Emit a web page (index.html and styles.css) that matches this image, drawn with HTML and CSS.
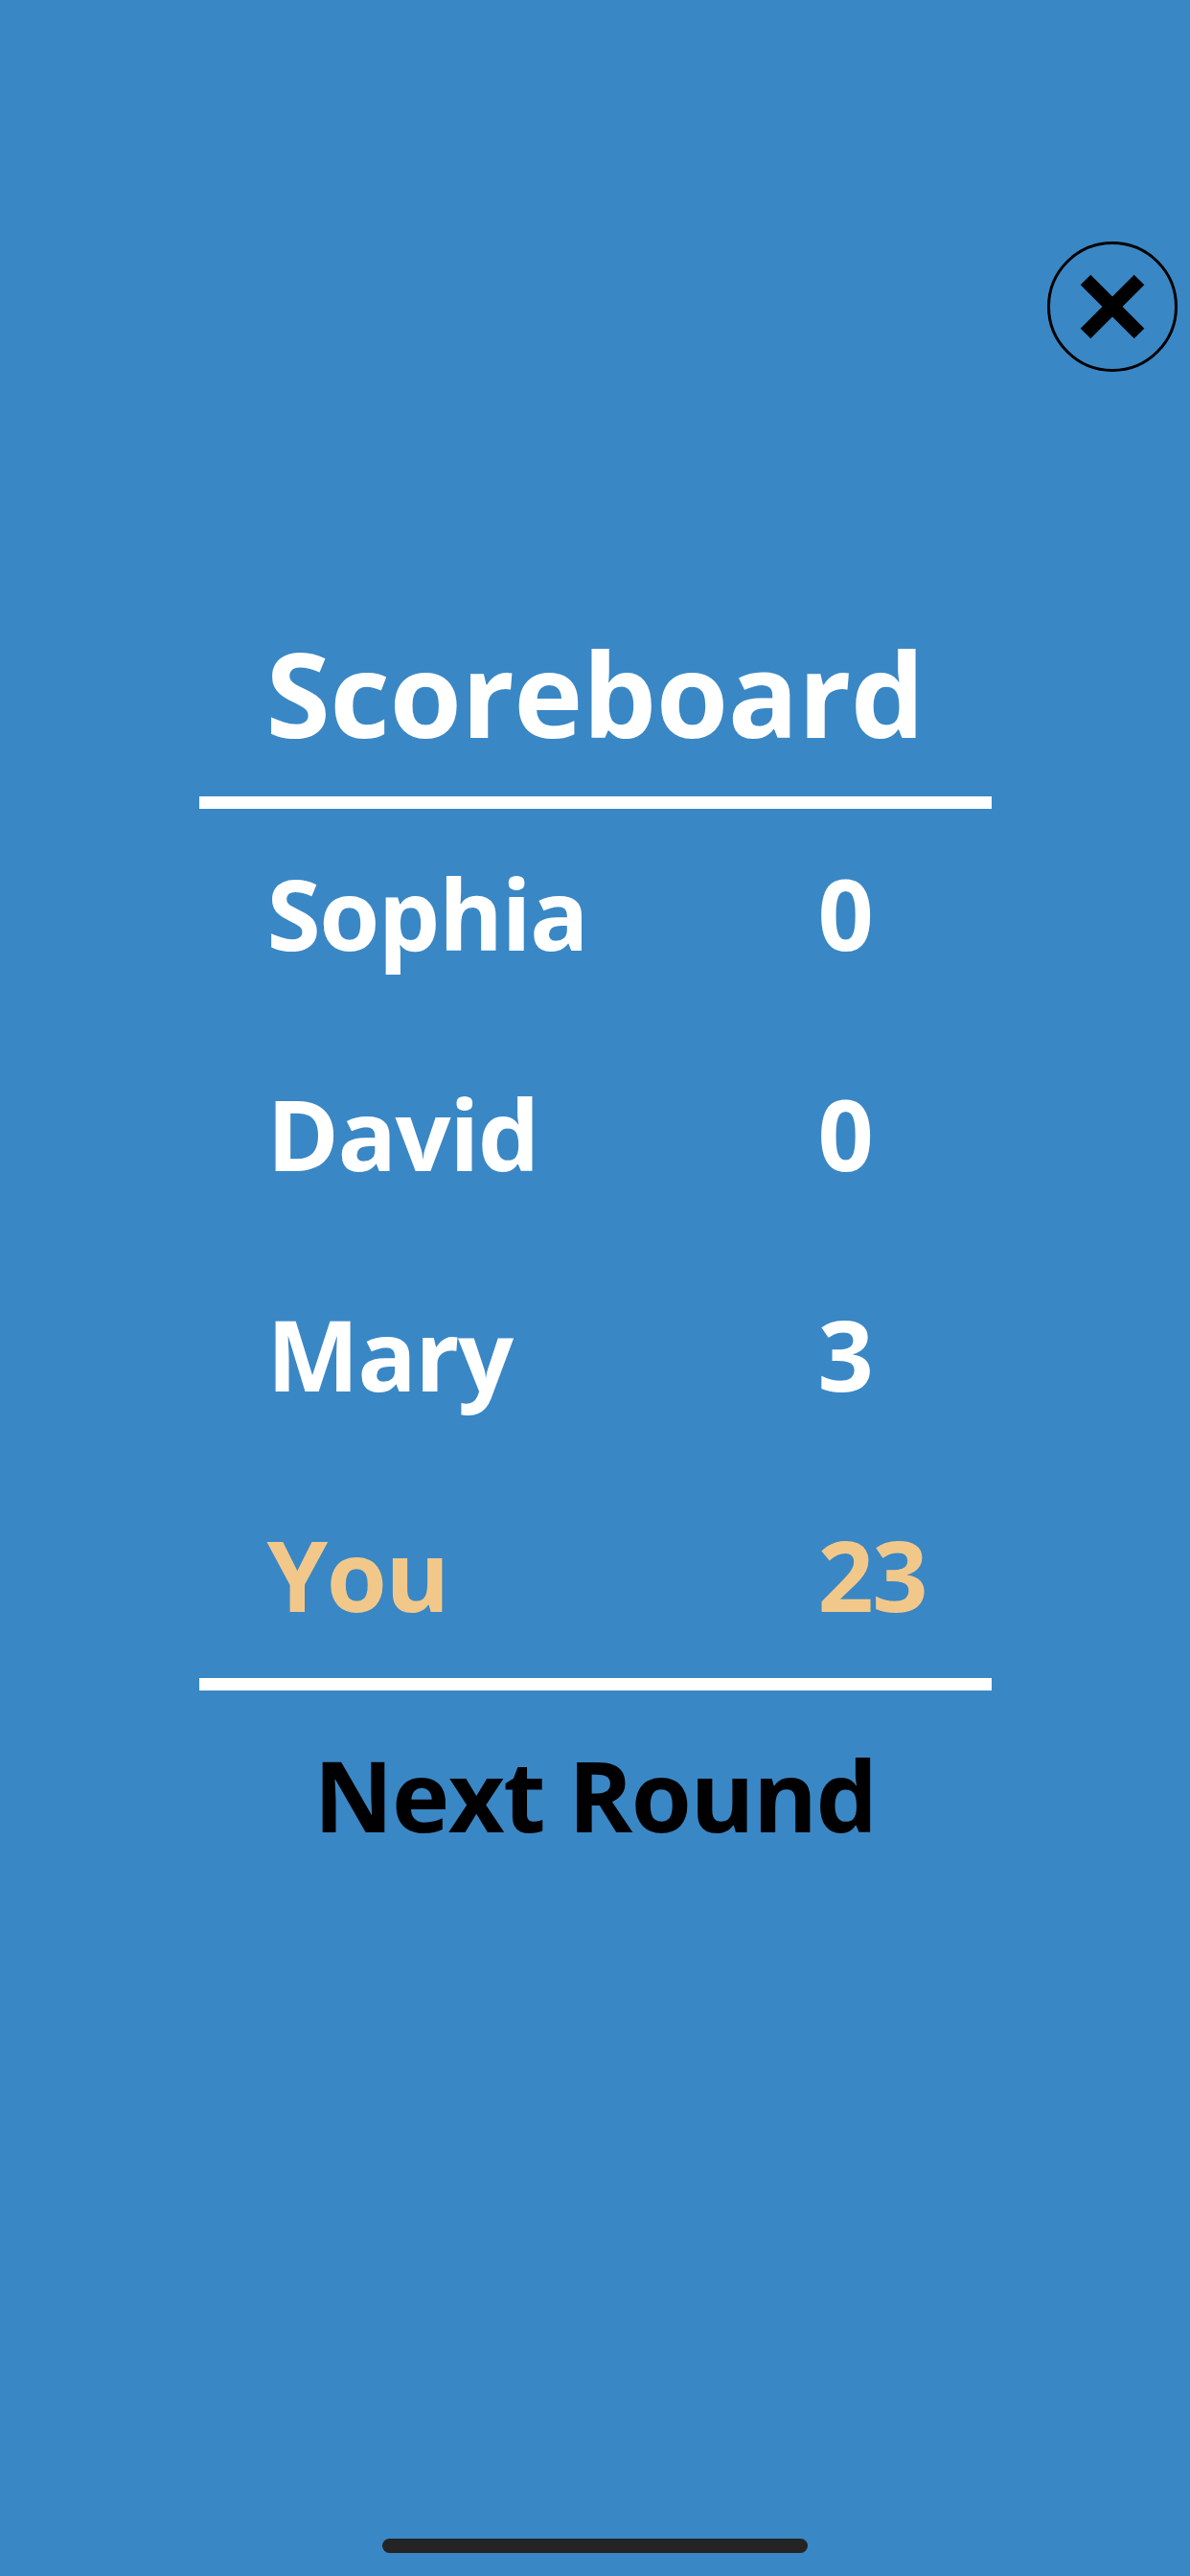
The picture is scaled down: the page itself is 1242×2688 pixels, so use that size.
FILE: index.html
```html
<!DOCTYPE html>
<html lang="en">
<head>
    <meta charset="UTF-8">
    <meta name="viewport" content="width=device-width, initial-scale=1.0">
    <title>Scoreboard</title>
    <link rel="stylesheet" href="styles.css">
</head>
<body>
    <header class="top-bar">
        <button class="close-btn" aria-label="Close">
            <svg width="136" height="136" viewBox="0 0 136 136">
                <circle cx="68" cy="68" r="66.5" fill="none" stroke="#000" stroke-width="3"/>
                <path d="M40 40 L96 96 M96 40 L40 96" stroke="#000" stroke-width="15" fill="none"/>
            </svg>
        </button>
    </header>
    <main class="board">
        <h1 class="board-title">Scoreboard</h1>
        <hr class="rule">
        <ul class="scores">
            <li class="score-row"><span class="name">Sophia</span><span class="points">0</span></li>
            <li class="score-row"><span class="name">David</span><span class="points">0</span></li>
            <li class="score-row"><span class="name">Mary</span><span class="points">3</span></li>
            <li class="score-row me"><span class="name">You</span><span class="points">23</span></li>
        </ul>
        <hr class="rule">
        <button class="next-btn">Next Round</button>
    </main>
    <div class="home-indicator"></div>
</body>
</html>
```

FILE: styles.css
```css
body {
    margin: 0;
    min-height: 100vh;
    display: flex;
    flex-direction: column;
    background-color: #3a87c5;
    font-family: "Open Sans", "Liberation Sans", sans-serif;
    font-weight: 700;
    letter-spacing: -1.5px;
}

.top-bar {
    display: flex;
    justify-content: flex-end;
    padding: 252px 13px 0 0;
}

.close-btn {
    width: 136px;
    height: 136px;
    padding: 0;
    border: none;
    background: none;
    cursor: pointer;
}

.close-btn svg {
    display: block;
}

.board {
    width: 827px;
    margin: 0 auto;
    display: flex;
    flex-direction: column;
}

.board-title {
    margin: 274px 0 47px;
    font-size: 122px;
    line-height: 122px;
    font-weight: 700;
    letter-spacing: -0.5px;
    color: #fff;
    text-align: center;
}

.rule {
    height: 13px;
    margin: 0;
    border: none;
    background-color: #fff;
}

.scores {
    list-style: none;
    margin: 58px 0 57px;
    padding: 0 0 0 71px;
    display: flex;
    flex-direction: column;
    gap: 128px;
}

.score-row {
    display: grid;
    grid-template-columns: 575px auto;
    font-size: 102px;
    line-height: 102px;
    color: #fff;
}

.score-row.me {
    color: #f2c88a;
}

.next-btn {
    margin: 58px auto 0;
    padding: 0;
    border: none;
    background: none;
    font-family: inherit;
    font-weight: 700;
    font-size: 102px;
    line-height: 102px;
    letter-spacing: inherit;
    color: #000;
    cursor: pointer;
}

.home-indicator {
    width: 444px;
    height: 15px;
    margin: auto auto 24px;
    border-radius: 8px;
    background-color: #242424;
}
```
